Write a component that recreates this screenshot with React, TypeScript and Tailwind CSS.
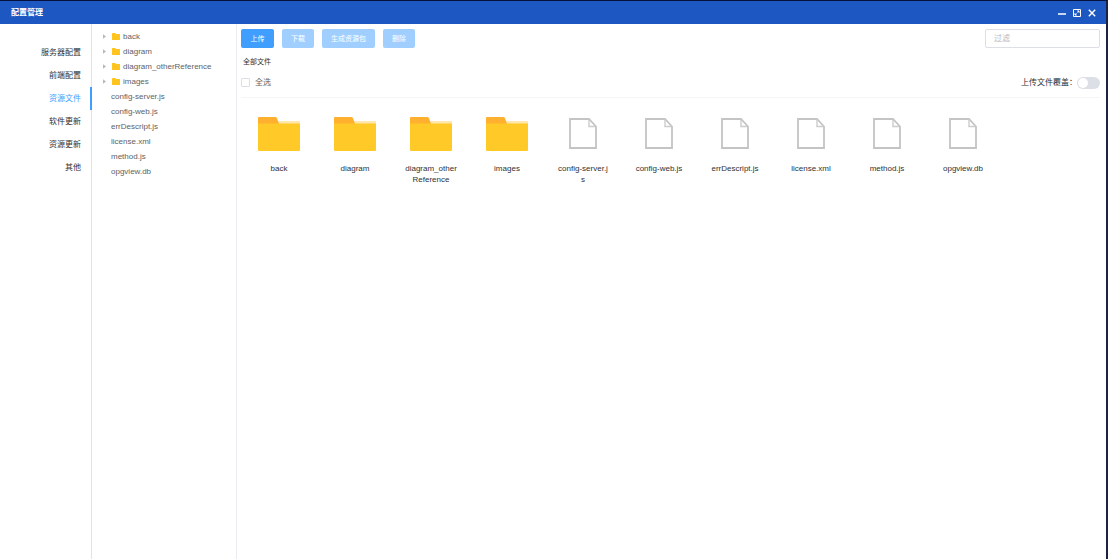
import { useState } from "react";

type Entry = { name: string; folder: boolean };

const entries: Entry[] = [
  { name: "back", folder: true },
  { name: "diagram", folder: true },
  { name: "diagram_otherReference", folder: true },
  { name: "images", folder: true },
  { name: "config-server.js", folder: false },
  { name: "config-web.js", folder: false },
  { name: "errDescript.js", folder: false },
  { name: "license.xml", folder: false },
  { name: "method.js", folder: false },
  { name: "opgview.db", folder: false },
];

const sections = ["服务器配置", "前端配置", "资源文件", "软件更新", "资源更新", "其他"];

function FolderIcon() {
  return (
    <svg viewBox="0 0 42 34" className="h-[34px] w-[42px]" aria-hidden="true">
      <path d="M17 4h24a1 1 0 0 1 1 1v4H17z" fill="#ffe7ad" />
      <path d="M1 0h16c1 0 1.600.5 2 1.300L21.500 8H0V1a1 1 0 0 1 1-1z" fill="#ffb02e" />
      <path d="M0 6.500h42V33a1 1 0 0 1-1 1H1a1 1 0 0 1-1-1z" fill="#ffca28" />
    </svg>
  );
}

function FileIcon() {
  return (
    <svg viewBox="0 0 28 31" className="h-[31px] w-7" fill="none" aria-hidden="true">
      <path d="M1 1h19l7 7.500V30H1z" stroke="#c4c4c4" strokeWidth="1.800" />
      <path d="M20 1.500v7h6.500" stroke="#cccccc" strokeWidth="1.400" />
    </svg>
  );
}

function TreeFolderIcon() {
  return (
    <svg viewBox="0 0 8 7" className="h-[7px] w-2" aria-hidden="true">
      <path d="M.5 0h2.700l1 1H7.500a.5.5 0 0 1 .5.5v5a.5.5 0 0 1-.5.5h-7a.5.5 0 0 1-.5-.5v-6A.5.5 0 0 1 .5 0z" fill="#ffc420" />
    </svg>
  );
}

function WindowButtons() {
  return (
    <div className="flex items-center gap-[7px] text-white">
      <button type="button" aria-label="最小化" className="h-2 w-2">
        <svg viewBox="0 0 8 8" className="h-2 w-2"><path d="M0 5h8" stroke="currentColor" strokeWidth="1.500" /></svg>
      </button>
      <button type="button" aria-label="还原" className="h-2 w-2">
        <svg viewBox="0 0 8 8" className="h-2 w-2" fill="none" stroke="currentColor">
          <path d="M.5.5h7v7h-7z" />
          <path d="M4.200 2H6v1.800M6 2 4.500 3.500M3.800 6H2V4.200M2 6l1.500-1.500" />
        </svg>
      </button>
      <button type="button" aria-label="关闭" className="h-2 w-2">
        <svg viewBox="0 0 8 8" className="h-2 w-2"><path d="m.8.8 6.400 6.400M7.200.8.8 7.200" stroke="currentColor" strokeWidth="1.400" /></svg>
      </button>
    </div>
  );
}

export default function App() {
  const [active, setActive] = useState("资源文件");
  const [overwrite, setOverwrite] = useState(false);
  const lightButton = "h-[19px] rounded-xs bg-[#a0cfff] px-[9px] text-[7px] text-white";

  return (
    <div className="flex min-h-screen flex-col border-t border-r-2 border-t-[#06103a] border-r-[#1c2340] bg-white font-['Liberation_Sans','Noto_Sans_CJK_SC',sans-serif] text-[8px] leading-3 text-[#606266]">
      <header className="flex h-[23px] items-center justify-between bg-[#1d58c2] pr-[10px] pl-[11px]">
        <h1 className="text-[8px] font-bold text-white">配置管理</h1>
        <WindowButtons />
      </header>

      <div className="flex flex-1">
        <nav className="flex w-[92px] shrink-0 flex-col border-r border-[#e0e3ea] pt-[17px]">
          {sections.map((name) => (
            <button
              key={name}
              type="button"
              onClick={() => setActive(name)}
              className={
                name === active
                  ? "-mr-px h-[23px] border-r-2 border-[#409eff] pr-[9px] text-right text-[#409eff]"
                  : "h-[23px] pr-[10px] text-right text-[#303133]"
              }
            >
              {name}
            </button>
          ))}
        </nav>

        <aside className="w-[145px] shrink-0 border-r border-[#ebecef] pt-[5px] pl-[11px]">
          <ul>
            {entries.map(({ name, folder }) => (
              <li key={name} className="flex h-[15px] items-center">
                {folder && (
                  <>
                    <svg viewBox="0 0 4 6" className="mr-[6px] h-[5px] w-[3px]" aria-hidden="true">
                      <path d="M0 0l4 3-4 3z" fill="#b4b8c0" />
                    </svg>
                    <TreeFolderIcon />
                  </>
                )}
                <span className={folder ? "ml-[3px]" : "ml-2"}>{name}</span>
              </li>
            ))}
          </ul>
        </aside>

        <main className="min-w-0 flex-1 pt-[5px] pr-[6px] pl-1">
          <div className="flex items-center gap-2">
            <button type="button" className="h-[19px] min-w-[33px] rounded-xs bg-[#409eff] px-[9px] text-[7px] text-white">上传</button>
            <button type="button" className={lightButton}>下载</button>
            <button type="button" className={lightButton}>生成资源包</button>
            <button type="button" className={lightButton}>删除</button>
            <input
              aria-label="过滤"
              placeholder="过滤"
              className="ml-auto h-[19px] w-[115px] rounded-xs border border-[#dcdfe6] px-2 text-[8px] outline-none placeholder:text-[#b4b8c0]"
            />
          </div>

          <div className="mt-2 pl-[2px] text-[7px] text-[#303133]">全部文件</div>

          <div className="mt-1 flex h-[26px] items-center justify-between border-b border-[#f5f5f6] pb-1">
            <label className="flex items-center gap-[5px]">
              <input type="checkbox" className="h-[9px] w-[9px] appearance-none rounded-[1px] border border-[#dcdfe6] bg-white checked:bg-[#409eff]" />
              全选
            </label>
            <label className="flex items-center text-[#303133]">
              上传文件覆盖：
              <span className="relative flex h-3 w-[23px]">
                <input
                  type="checkbox"
                  role="switch"
                  checked={overwrite}
                  onChange={(e) => setOverwrite(e.target.checked)}
                  className="peer h-3 w-[23px] appearance-none rounded-full bg-[#dcdfe6] checked:bg-[#409eff]"
                />
                <span className="pointer-events-none absolute top-px left-px h-[10px] w-[10px] rounded-full bg-white peer-checked:left-3" />
              </span>
            </label>
          </div>

          <ul className="flex flex-wrap pt-[19px]">
            {entries.map(({ name, folder }) => (
              <li key={name} className="flex w-[76px] flex-col items-center px-3">
                <div className={folder ? "h-[34px]" : "h-[34px] pt-px"}>
                  {folder ? <FolderIcon /> : <FileIcon />}
                </div>
                <span className="mt-3 w-full text-center leading-[11px] break-all text-[#303133]">{name}</span>
              </li>
            ))}
          </ul>
        </main>
      </div>
    </div>
  );
}
